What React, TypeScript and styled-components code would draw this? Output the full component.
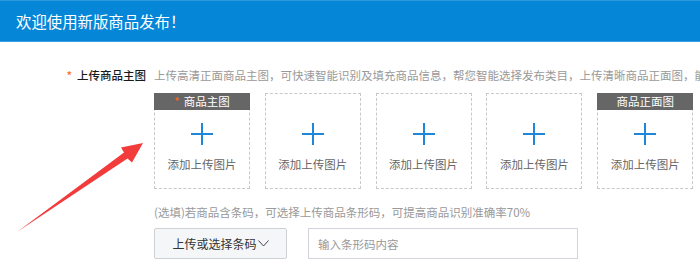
import React from 'react';
import styled, { createGlobalStyle } from 'styled-components';

const GlobalStyle = createGlobalStyle`
  html, body {
    margin: 0;
    padding: 0;
    background: #fff;
  }
  body {
    font-family: "Noto Sans CJK SC", "Liberation Sans", sans-serif;
    font-size: 11.5px;
    color: #333;
  }
`;

const Page = styled.div`
  position: relative;
  width: 700px;
  height: 274px;
  overflow: hidden;
`;

const Banner = styled.header`
  background: #0586d7;
  border-top: 1px solid #2b98dc;
  border-bottom: 1px solid #3a9fe0;
  box-sizing: border-box;
  height: 42px;
  display: flex;
  align-items: center;
  padding-left: 16px;
  color: #fff;
  font-size: 15.4px;
`;

const FormRow = styled.div`
  display: grid;
  grid-template-columns: 146px 1fr;
  column-gap: 8px;
  margin-top: 24px;
`;

const Label = styled.div`
  text-align: right;
  line-height: 18px;
  color: #1a1a1a;
  font-weight: 500;
  white-space: nowrap;
`;

const Star = styled.span<{ $inTag?: boolean }>`
  color: #ff6a1a;
  margin-right: ${(p) => (p.$inTag ? '4px' : '5px')};
`;

const Field = styled.div`
  min-width: 0;
  overflow: hidden;
`;

const Hint = styled.div<{ $gap?: number }>`
  color: #999;
  line-height: 18px;
  white-space: nowrap;
  margin-top: ${(p) => p.$gap ?? 0}px;
`;

const Slots = styled.div`
  display: flex;
  gap: 14.8px;
  margin-top: 9px;
`;

const Slot = styled.div`
  width: 96px;
  height: 96px;
  box-sizing: border-box;
  border: 1px dashed #c8c8c8;
  display: flex;
  flex-direction: column;
  align-items: center;
  position: relative;
`;

const Tag = styled.div`
  position: absolute;
  top: -1px;
  left: -1px;
  right: -1px;
  height: 17px;
  background: #666;
  color: #fff;
  font-size: 11.5px;
  line-height: 17px;
  text-align: center;
`;

const PlusIcon = styled.svg`
  margin-top: 28px;
  display: block;
`;

const SlotText = styled.div`
  margin-top: 9px;
  color: #666;
  line-height: 18px;
`;

const Controls = styled.div`
  display: flex;
  gap: 21px;
  margin-top: 7px;
`;

const PickButton = styled.button`
  width: 133px;
  height: 31px;
  box-sizing: border-box;
  background: #f5f6f8;
  border: 1px solid #cfd1d6;
  border-radius: 2px;
  font-family: inherit;
  font-size: 12px;
  color: #333;
  display: flex;
  align-items: center;
  justify-content: center;
  gap: 1px;
  padding: 0;
`;

const CodeInput = styled.input`
  width: 270px;
  height: 31px;
  box-sizing: border-box;
  border: 1px solid #d3d3dd;
  padding: 0 9px;
  font-family: inherit;
  font-size: 11.5px;
  color: #333;
  outline: none;
  &::placeholder {
    color: #999;
  }
`;

const Pointer = styled.svg`
  position: absolute;
  left: 0;
  top: 0;
  pointer-events: none;
`;

const slots: { tag?: string; required?: boolean }[] = [
  { tag: '商品主图', required: true },
  {},
  {},
  {},
  { tag: '商品正面图' },
];

const App: React.FC = () => {
  return (
    <Page>
      <GlobalStyle />
      <Banner>欢迎使用新版商品发布！</Banner>
      <FormRow>
        <Label>
          <Star>*</Star>上传商品主图
        </Label>
        <Field>
          <Hint>
            上传高清正面商品主图，可快速智能识别及填充商品信息，帮您智能选择发布类目，上传清晰商品正面图，能更准确识别
          </Hint>
          <Slots>
            {slots.map((s, i) => (
              <Slot key={i}>
                {s.tag ? (
                  <Tag>
                    {s.required ? <Star $inTag>*</Star> : null}
                    {s.tag}
                  </Tag>
                ) : null}
                <PlusIcon width="24" height="24" viewBox="0 0 24 24">
                  <path d="M12 1v22M1 12h22" stroke="#1f86d9" strokeWidth="2" fill="none" />
                </PlusIcon>
                <SlotText>添加上传图片</SlotText>
              </Slot>
            ))}
          </Slots>
          <Hint $gap={14}>(选填)若商品含条码，可选择上传商品条形码，可提高商品识别准确率70%</Hint>
          <Controls>
            <PickButton type="button">
              上传或选择条码
              <svg width="11" height="7" viewBox="0 0 11 7">
                <polyline points="0.5,0.5 5.5,6 10.5,0.5" stroke="#444" strokeWidth="1" fill="none" />
              </svg>
            </PickButton>
            <CodeInput placeholder="输入条形码内容" />
          </Controls>
        </Field>
      </FormRow>
      <Pointer width="700" height="274" viewBox="0 0 700 274">
        <polygon
          points="143,143 121,147.5 124,152.5 17,232 127.5,158.5 132,162.5"
          fill="#f23b3b"
        />
      </Pointer>
    </Page>
  );
};

export default App;
